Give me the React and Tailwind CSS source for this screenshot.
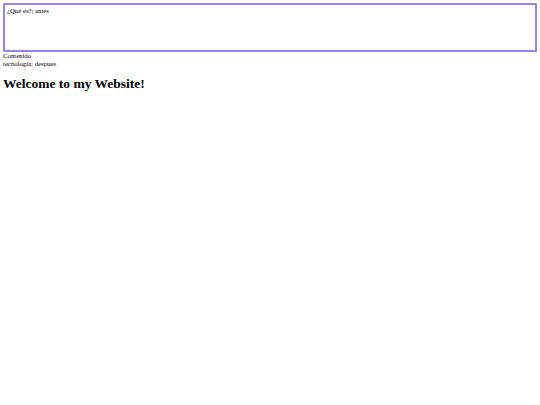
export default function App() {
  return (
    <div className="bg-white w-[540px] h-[405px] p-[3px] text-black" style={{ fontFamily: '"Liberation Serif", serif' }}>
      <div className="w-[534px] h-[49px] border-2 border-[#9a84e2] rounded-[1px] px-[2px] pt-[2px] text-[6.75px] leading-[1.15]">
        ¿Qué es?; antes
      </div>
      <div className="text-[6.75px] leading-[1.15]">Contenido</div>
      <div className="text-[6.75px] leading-[1.15]">tecnología; despues</div>
      <h1 className="text-[13.5px] font-bold leading-[1.15] mt-[8px]">Welcome to my Website!</h1>
    </div>
  );
}
